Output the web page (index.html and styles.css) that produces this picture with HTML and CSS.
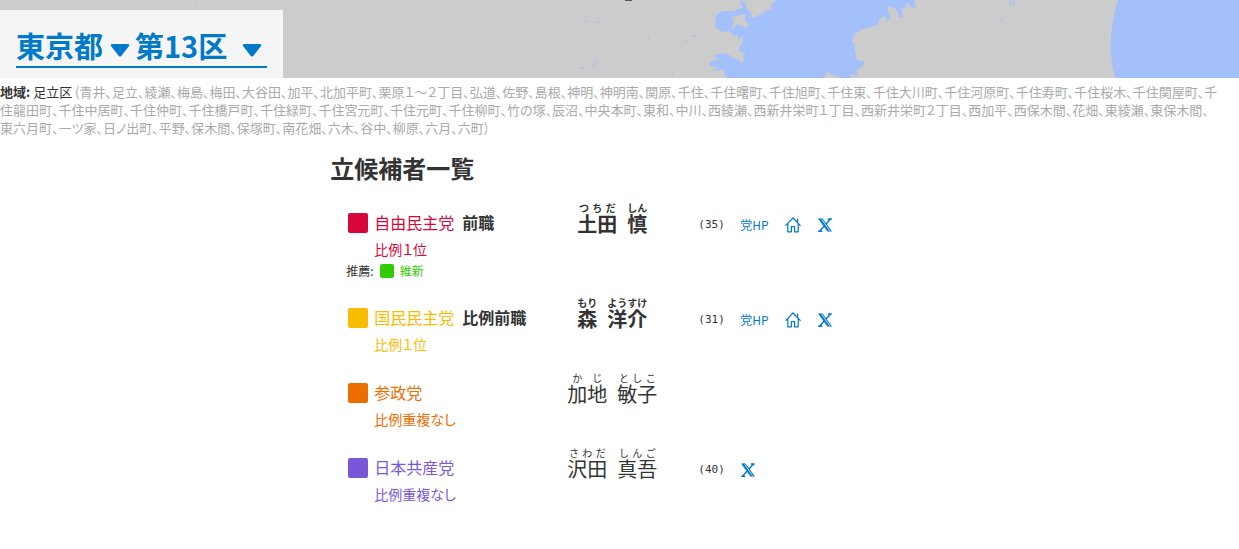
FILE: index.html
```html
<!DOCTYPE html>
<html lang="ja">
<head>
  <meta charset="UTF-8">
  <meta name="viewport" content="width=device-width, initial-scale=1">
  <title>東京都第13区 立候補者一覧</title>
  <link rel="stylesheet" href="styles.css">
</head>
<body>

  <svg class="defs" aria-hidden="true">
    <symbol id="home" viewBox="0 0 16 16">
      <path d="M.8 8.3 8 1l7.2 7.3M2.8 6.8v8h3.6V9.6h3.2v5.2h3.6v-8M12.6 5.4V2" fill="none" stroke="currentColor" stroke-width="1.2" stroke-linejoin="round" stroke-linecap="round"/>
    </symbol>
    <symbol id="x" viewBox="0 0 16 16">
      <path d="M1 1.5h4.6L15 14.5h-4.6zM3 2.3h2.1L13 13.7h-2.1z" fill="currentColor" fill-rule="evenodd"/>
      <path d="M3.2 2l8.4 12M10.8 2h4M1.2 14.2h4M13.6 2 8.8 7.2M7 9.2l-4.6 5" fill="none" stroke="currentColor" stroke-width="1.4"/>
    </symbol>
  </svg>

  <header class="map">
    <svg class="map-art" viewBox="0 0 1239 78" preserveAspectRatio="xMidYMin slice" aria-hidden="true">
      <path class="sea" d="M776 0 772 3 764 7 757 10 754 12 751 8 748 11 745 2 740 0 742 8 737 9 734 12 731 13 733 17 740 15 745 14 745 20 749 25 746 28 737 24 733 29 735 36 738 34 738 40 743 35 742 44 739 47 740 53 746 52 743 56 744 61 741 63 738 59 732 58 730 55 721 53 713 56 720 59 710 62 709 66 717 67 713 71 724 69 724 75 728 78H824L827 72 840 78H852L850 74 857 75 857 70 864 65 864 61 857 60 855 51 855 44 852 41 855 34 863 29 878 25 880 18 886 16 886 22 891 18 887 8 894 5 898 12 900 0z"/>
      <path class="sea" d="M734 11 725 11 718 13 715 18 716 24 715 27 722 32 724 31 727 33 730 31 733 36 736 32 732 29 734 20 731 16z"/>
      <path class="sea" d="M888 0h26l2 7-4 1-5-6-2 7-4-1 2 9-3 1-4-9-5-2-1-3zM1118 0Q1105 41 1115 78H1239V0z"/>
      <path class="land" d="m748 8 16-8h5l3 8-19 10zM768 0h8l-5 4z"/>
      <path class="stream" d="m584 22 4-1m7 1h5M649 37v3M691 36l6 1M683 42l5-1M598 60l-2 4-4 2M579 69l6-2M673 72v3M195 5h2M1001 22l1-3M1010 0v7M1010 3h5M1014 0v3M1014 5v2"/>
      <path class="label" d="M625 0h7v1h-7z"/>
    </svg>
    <div class="pickers">
      <div class="picker-line">
        <label class="picker"><select aria-label="都道府県"><option>東京都</option></select>
          <svg viewBox="0 0 20 13" aria-hidden="true"><path d="M2.5 0h15Q20 0 19 2L12 11Q10 14 8 11L1 2Q0 0 2.5 0z"/></svg>
        </label>
        <label class="picker"><select class="district" aria-label="選挙区"><option>第13区</option></select>
          <svg viewBox="0 0 20 13" aria-hidden="true"><path d="M2.5 0h15Q20 0 19 2L12 11Q10 14 8 11L1 2Q0 0 2.5 0z"/></svg>
        </label>
      </div>
    </div>
  </header>

  <p class="area"><b>地域:</b> <span class="ward">足立区</span> (青井、足立、綾瀬、梅島、梅田、大谷田、加平、北加平町、栗原１～２丁目、弘道、佐野、島根、神明、神明南、関原、千住、千住曙町、千住旭町、千住東、千住大川町、千住河原町、千住寿町、千住桜木、千住関屋町、千住龍田町、千住中居町、千住仲町、千住橋戸町、千住緑町、千住宮元町、千住元町、千住柳町、竹の塚、辰沼、中央本町、東和、中川、西綾瀬、西新井栄町１丁目、西新井栄町２丁目、西加平、西保木間、花畑、東綾瀬、東保木間、東六月町、一ツ家、日ノ出町、平野、保木間、保塚町、南花畑、六木、谷中、柳原、六月、六町)</p>

  <main class="candidates">
    <h2>立候補者一覧</h2>
    <table>
      <tbody>
        <tr>
          <td class="party ldp">
            <div class="party-name"><i class="mark"></i>自由民主党 <b>前職</b></div>
            <div class="ratio">比例１位</div>
            <div class="backing">推薦: <span class="ishin"><i class="mark"></i>維新</span></div>
          </td>
          <td class="name"><b><ruby>土田<rt>つちだ</rt></ruby><ruby>慎<rt>しん</rt></ruby></b></td>
          <td class="age">(35)</td>
          <td class="links"><div>
            <a href="#">党HP</a>
            <a href="#" aria-label="ホームページ"><svg><use href="#home"/></svg></a>
            <a href="#" aria-label="X"><svg><use href="#x"/></svg></a>
          </div></td>
        </tr>
        <tr>
          <td class="party dpp">
            <div class="party-name"><i class="mark"></i>国民民主党 <b>比例前職</b></div>
            <div class="ratio">比例１位</div>
          </td>
          <td class="name"><b><ruby>森<rt>もり</rt></ruby><ruby>洋介<rt>ようすけ</rt></ruby></b></td>
          <td class="age">(31)</td>
          <td class="links"><div>
            <a href="#">党HP</a>
            <a href="#" aria-label="ホームページ"><svg><use href="#home"/></svg></a>
            <a href="#" aria-label="X"><svg><use href="#x"/></svg></a>
          </div></td>
        </tr>
        <tr>
          <td class="party sansei">
            <div class="party-name"><i class="mark"></i>参政党</div>
            <div class="ratio">比例重複なし</div>
          </td>
          <td class="name"><ruby>加地<rt>かじ</rt></ruby><ruby>敏子<rt>としこ</rt></ruby></td>
          <td class="age"></td>
          <td class="links"></td>
        </tr>
        <tr>
          <td class="party jcp">
            <div class="party-name"><i class="mark"></i>日本共産党</div>
            <div class="ratio">比例重複なし</div>
          </td>
          <td class="name"><ruby>沢田<rt>さわだ</rt></ruby><ruby>真吾<rt>しんご</rt></ruby></td>
          <td class="age">(40)</td>
          <td class="links"><div>
            <a href="#" aria-label="X"><svg><use href="#x"/></svg></a>
          </div></td>
        </tr>
      </tbody>
    </table>
  </main>

</body>
</html>
```
FILE: styles.css
```css
* {
  box-sizing: border-box;
}

body {
  margin: 0;
  background: #fff;
  color: #333;
  font-family: "Noto Sans CJK JP", sans-serif;
  font-size: 16px;
}

.defs {
  display: none;
}

/* map header */
.map {
  position: relative;
  padding-top: 10px;
  background: #ccc;
  overflow: hidden;
}

.map-art {
  position: absolute;
  top: 0;
  left: 0;
  width: 100%;
  height: 100%;
}

.sea {
  fill: #a4c0fa;
}

.land {
  fill: #ccc;
}

.stream {
  fill: none;
  stroke: #a4c0fa;
}

.label {
  fill: #555;
}

.pickers {
  position: relative;
  width: fit-content;
  padding: 15px 16px 10px;
  background: #f5f5f5;
}

.picker-line {
  display: flex;
  gap: 5px;
  padding: 0 5px 1px 0;
  border-bottom: 2px solid #007ac9;
}

.picker {
  display: flex;
  align-items: center;
  gap: 6px;
  color: #007ac9;
}

.picker select {
  appearance: none;
  height: 40px;
  padding: 0;
  border: 0;
  background: none;
  color: inherit;
  font: bold 29px/40px "Noto Sans CJK JP", sans-serif;
  cursor: pointer;
}

.picker .district {
  width: 101px;
}

.picker svg {
  width: 20px;
  height: 13px;
  margin-top: 10px;
  fill: currentColor;
}

.area {
  margin: 5px 0 0;
  padding-right: 20px;
  color: #aaa;
  font-size: 13px;
  line-height: 18px;
  font-feature-settings: "palt";
}

.area b,
.ward {
  color: #333;
}

/* candidate list */
.candidates {
  width: fit-content;
  margin: 0 auto;
  padding: 0 76px 32px 0;
}

h2 {
  margin: 11px 0 15px;
  font-size: 24px;
  line-height: 40px;
}

table {
  border-collapse: collapse;
}

td {
  padding: 0;
  vertical-align: top;
}

.party {
  width: 216px;
  padding: 4px 0 17px 16px;
}

.party-name {
  display: flex;
  align-items: center;
  line-height: 30px;
}

.party b {
  margin-left: 8px;
  color: #333;
}

.mark {
  width: 20px;
  height: 20px;
  margin: 2px 6px 0 2px;
  border-radius: 2px;
  background: currentColor;
}

.ratio {
  padding-left: 28px;
  font-size: 14px;
  line-height: 24px;
  font-feature-settings: "palt";
}

.backing {
  display: flex;
  align-items: center;
  color: #333;
  font-size: 12px;
  line-height: 20px;
}

.backing .ishin {
  display: flex;
  align-items: center;
  color: #3c0;
}

.backing .mark {
  width: 14px;
  height: 14px;
  margin: 0 6px;
}

.ldp {
  color: #d7063b;
}

.dpp {
  color: #f8bc00;
}

.sansei {
  color: #ed6d00;
}

.jcp {
  color: #7a57d8;
}

.name {
  width: 132px;
  font-size: 20px;
  line-height: 30px;
  text-align: center;
}

.name ruby + ruby {
  margin-left: 10px;
}

rt {
  font-size: 10px;
  line-height: 12px;
}

.age {
  width: 62px;
  padding-left: 20px;
  font: 11px/44px "DejaVu Sans Mono", monospace;
}

.links div {
  display: flex;
  align-items: center;
  gap: 16px;
  height: 42px;
}

.links a {
  display: flex;
  color: #007ac9;
  font-size: 12px;
  text-decoration: none;
}

.links svg {
  width: 16px;
  height: 16px;
  margin-top: 2px;
}
```
